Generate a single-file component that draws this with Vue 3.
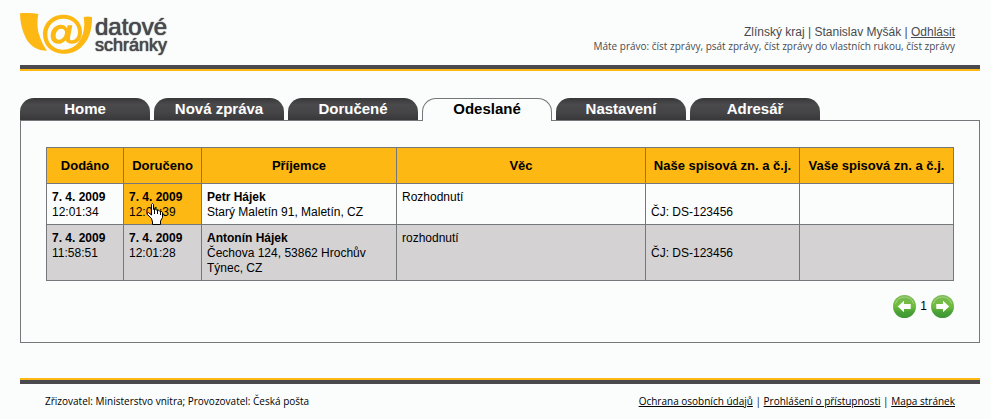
<script setup>
const tabs = ['Home', 'Nová zpráva', 'Doručené', 'Odeslané', 'Nastavení', 'Adresář']
const activeTab = 'Odeslané'
const columns = [
  { label: 'Dodáno', cls: 'c-sent' },
  { label: 'Doručeno', cls: 'c-delivered' },
  { label: 'Příjemce', cls: 'c-recipient' },
  { label: 'Věc', cls: 'c-subject' },
  { label: 'Naše spisová zn. a č.j.', cls: 'c-ref' },
  { label: 'Vaše spisová zn. a č.j.', cls: 'c-ref' },
]
const messages = [
  {
    sent: ['7. 4. 2009', '12:01:34'],
    delivered: ['7. 4. 2009', '12:01:39'],
    name: 'Petr Hájek',
    address: 'Starý Maletín 91, Maletín, CZ',
    subject: 'Rozhodnutí',
    ref: 'ČJ: DS-123456',
    hovered: true,
  },
  {
    sent: ['7. 4. 2009', '11:58:51'],
    delivered: ['7. 4. 2009', '12:01:28'],
    name: 'Antonín Hájek',
    address: 'Čechova 124, 53862 Hrochův Týnec, CZ',
    subject: 'rozhodnutí',
    ref: 'ČJ: DS-123456',
    hovered: false,
  },
]
</script>

<template>
  <div class="page">
    <header class="header">
      <a class="logo" href="#">
        <svg class="mark" viewBox="6 8 219 123" aria-hidden="true">
          <path fill="#fdb813" d="M6 9C26 7 45 8 61 11C57 32 57 54 64 75C69 91 77 107 87 121C58 121 36 107 23 82C12 61 6 35 6 9Z" />
          <path fill="#fdb813" d="M197 20Q210 17 222 20C223 60 211 93 188 112C172 126 151 131 132 130C98 128 75 104 75 72C75 39 101 13 136 13C169 13 192 36 192 64C192 87 180 100 162 100C152 100 145 97 143 90C136 98 128 101 119 100C105 99 98 89 98 76C98 58 111 43 128 43C137 43 144 47 147 54L149 45H163L156 82C155 88 158 90 162 90C173 89 180 79 180 65C180 42 162 25 136 25C108 25 88 46 88 72C88 99 107 118 134 118C154 118 171 110 182 95C196 77 202 52 197 20ZM130 55C120 55 113 65 113 76C113 84 117 88 123 88C134 88 141 77 141 66C141 59 137 55 130 55Z" />
        </svg>
        <span class="brand"><span class="brand-top">datové</span><span class="brand-bottom">schránky</span></span>
      </a>
      <div class="account">
        <div class="user">Zlínský kraj | Stanislav Myšák | <a href="#">Odhlásit</a></div>
        <div class="rights">Máte právo: číst zprávy, psát zprávy, číst zprávy do vlastních rukou, číst zprávy</div>
      </div>
    </header>

    <nav class="tabs">
      <a v-for="tab in tabs" :key="tab" href="#" class="tab" :class="{ active: tab === activeTab }">{{ tab }}</a>
    </nav>

    <main class="panel">
      <table class="messages">
        <thead>
          <tr>
            <th v-for="col in columns" :key="col.label" :class="col.cls" scope="col">{{ col.label }}</th>
          </tr>
        </thead>
        <tbody>
          <tr v-for="m in messages" :key="m.sent[1]">
            <td><b>{{ m.sent[0] }}</b><br />{{ m.sent[1] }}</td>
            <td :class="{ hovered: m.hovered }">
              <b>{{ m.delivered[0] }}</b><br />{{ m.delivered[1] }}
              <svg v-if="m.hovered" class="pointer" viewBox="0 0 17 22" aria-hidden="true">
                <path fill="#fff" stroke="#000" d="M5.5 15.5L1.5 11.5Q0.5 9.5 2.5 9.5L5.5 12V1.5Q6.5 -0.5 7.5 1.5V6.5Q9 5 10.500 7Q12 6 13.500 8Q15.500 7.500 16.500 9.500V14.500L14.500 18V21.500H6.500V19Z" />
                <path fill="none" stroke="#000" d="M8.500 6V11M11.500 7V11M14.500 8V12" />
              </svg>
            </td>
            <td><b>{{ m.name }}</b><br />{{ m.address }}</td>
            <td>{{ m.subject }}</td>
            <td><br />{{ m.ref }}</td>
            <td></td>
          </tr>
        </tbody>
      </table>

      <div class="pager">
        <button type="button" aria-label="Předchozí">
          <svg viewBox="0 0 24 24" aria-hidden="true">
            <defs>
              <linearGradient id="ball" x1="0" y1="0" x2="0" y2="1">
                <stop offset="0" stop-color="#7cb956" />
                <stop offset="0.5" stop-color="#6fbd3c" />
                <stop offset="0.75" stop-color="#48a036" />
                <stop offset="1" stop-color="#3f9736" />
              </linearGradient>
            </defs>
            <circle cx="12" cy="12" r="12" fill="url(#ball)" />
            <path fill="none" stroke="#a8d68a" d="M2.500 9A10 10 0 0 1 21.500 9" />
            <path fill="#fff" d="M5 12L11.500 6V9.500H18.500V14.500H11.500V18Z" />
          </svg>
        </button>
        <span>1</span>
        <button type="button" aria-label="Další">
          <svg viewBox="0 0 24 24" aria-hidden="true">
            <circle cx="12" cy="12" r="12" fill="url(#ball)" />
            <path fill="none" stroke="#a8d68a" d="M2.500 9A10 10 0 0 1 21.500 9" />
            <path fill="#fff" d="M19 12L12.500 6V9.500H5.500V14.500H12.500V18Z" />
          </svg>
        </button>
      </div>
    </main>

    <footer class="footer">
      <div>Zřizovatel: Ministerstvo vnitra; Provozovatel: Česká pošta</div>
      <div><a href="#">Ochrana osobních údajů</a> | <a href="#">Prohlášení o přístupnosti</a> | <a href="#">Mapa stránek</a></div>
    </footer>
  </div>
</template>

<style>
body {
  background: #fbfdfc;
}
</style>

<style scoped>
.page {
  padding: 0 11px 0 20px;
  font-family: "Liberation Sans", Arial, sans-serif;
  font-size: 12px;
  line-height: 15px;
  color: #000;
}
.header {
  display: flex;
  justify-content: space-between;
  align-items: flex-start;
  box-sizing: border-box;
  height: 71px;
  padding: 13px 25px 0 0;
  border-bottom: 2px solid #fdb813;
  box-shadow: inset 0 -4px #4a4a4e;
}
.logo {
  display: flex;
  gap: 2px;
  color: #4a4a4e;
  text-decoration: none;
}
.mark {
  width: 73px;
  height: 41px;
}
.brand {
  display: flex;
  flex-direction: column;
  padding-top: 4px;
  text-shadow: 0 0 1px #4a4a4e, 0 0 1px #4a4a4e;
}
.brand-top {
  font-size: 24px;
  line-height: 20px;
}
.brand-bottom {
  font-size: 18px;
  line-height: 16px;
}
.account {
  padding-top: 12px;
  text-align: right;
  color: #4a4a4e;
}
.user a {
  color: inherit;
}
.rights,
.footer {
  font-family: "Open Sans", "Liberation Sans", sans-serif;
  font-size: 10px;
}
.rights {
  line-height: 13px;
}
.tabs {
  display: flex;
  gap: 4px;
  margin-top: 27px;
}
.tab {
  box-sizing: border-box;
  width: 130px;
  height: 22px;
  border-radius: 14px 14px 0 0;
  background: linear-gradient(#38383a, #4a494c 30%, #454548 65%, #38383b);
  color: #fff;
  font-size: 15px;
  font-weight: bold;
  line-height: 22px;
  text-align: center;
  text-decoration: none;
}
.tab.active {
  height: 23px;
  margin-bottom: -1px;
  border: 1px solid #75787a;
  border-bottom: 0;
  background: #fbfdfc;
  color: #000;
  line-height: 20px;
  z-index: 1;
}
.panel {
  padding: 26px 25px 24px;
  border: 1px solid #75787a;
}
.messages {
  width: 100%;
  border-collapse: collapse;
  table-layout: fixed;
}
.messages th,
.messages td {
  box-sizing: border-box;
  border: 1px solid #75787a;
}
.messages th {
  height: 36px;
  padding: 0;
  background: #fdb813;
  font-size: 13px;
}
.messages td {
  position: relative;
  padding: 6px 20px 4px 5px;
  vertical-align: top;
}
.messages td:nth-child(-n+2) {
  padding-right: 0;
}
.messages tbody tr:nth-child(2) {
  background: #d4d2d3;
}
.messages td.hovered {
  background: #fdb813;
}
.c-sent {
  width: 77px;
}
.c-delivered {
  width: 78px;
}
.c-recipient {
  width: 195px;
}
.c-ref {
  width: 154px;
}
.pointer {
  position: absolute;
  left: 22px;
  top: 19px;
  width: 17px;
  height: 22px;
}
.pager {
  display: flex;
  justify-content: flex-end;
  align-items: center;
  gap: 4px;
  margin-top: 14px;
}
.pager button {
  padding: 0;
  border: 0;
  background: none;
}
.pager svg {
  display: block;
  width: 23px;
  height: 23px;
}
.footer {
  display: flex;
  justify-content: space-between;
  margin-top: 35px;
  padding: 14px 25px 12px;
  border-top: 2px solid #fdb813;
  box-shadow: inset 0 4px #4a4a4e;
}
.footer a {
  color: inherit;
}
</style>
